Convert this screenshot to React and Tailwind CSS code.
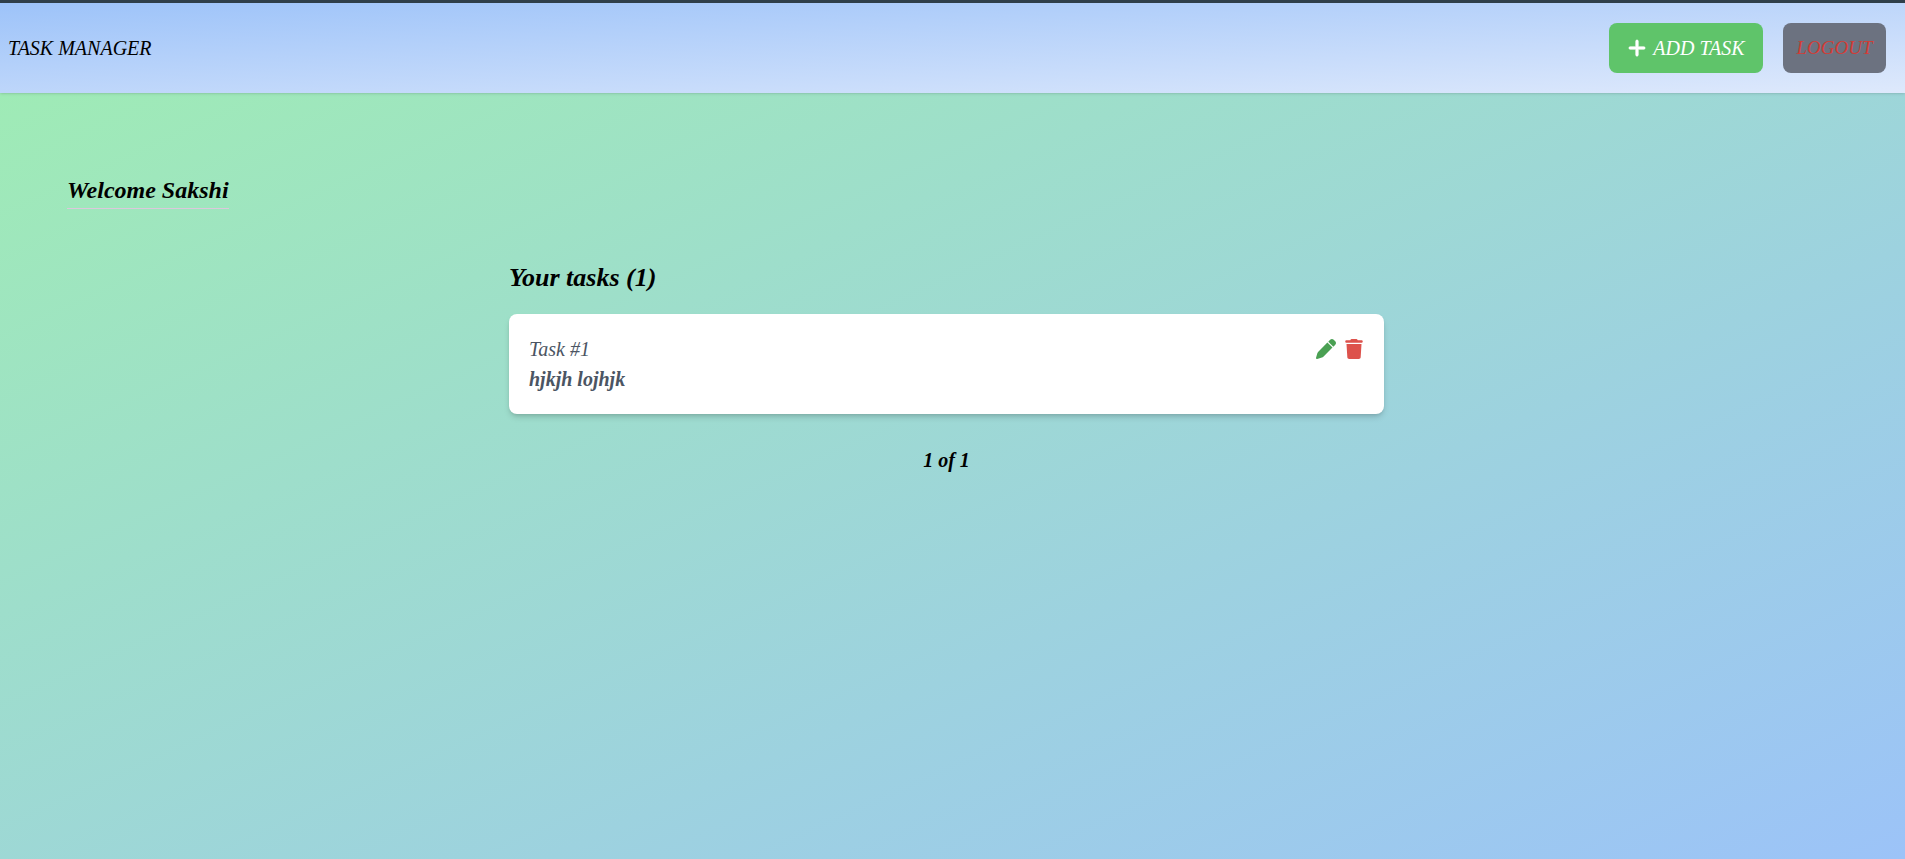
import React from "react";
import { FaPen, FaPlus, FaTrash } from "react-icons/fa6";

const tasks = [{ id: 1, description: "hjkjh lojhjk" }];

function Header() {
  return (
    <header className="flex items-center justify-between border-t-[3px] border-[#2f3f4a] bg-linear-to-br/srgb from-[#9dc3f9] to-[#dee9fc] px-2 py-5 shadow-sm">
      <a href="#home" className="leading-[50px]">TASK MANAGER</a>
      <nav className="mr-[11px] flex items-center gap-5">
        <a
          href="#add"
          className="flex h-[50px] w-[154px] items-center justify-center gap-1.5 rounded-lg bg-[#5fc46a] text-white"
        >
          <FaPlus aria-hidden="true" className="size-5 stroke-current stroke-[16px]" />
          ADD TASK
        </a>
        <button
          type="button"
          className="h-[50px] w-[103px] rounded-lg bg-[#6c7280] text-[19px] text-[#d23c36] italic"
        >
          LOGOUT
        </button>
      </nav>
    </header>
  );
}

function TaskCard({ task, number }) {
  return (
    <article className="rounded-lg bg-white p-5 leading-[30px] text-[#4b5563] shadow-md shadow-black/15">
      <div className="flex items-center justify-between">
        <span>Task #{number}</span>
        <div className="flex items-center gap-2">
          <button type="button" aria-label="Edit task" className="text-[#4aa053]">
            <FaPen className="size-5" />
          </button>
          <button type="button" aria-label="Delete task" className="text-[#dd524c]">
            <FaTrash className="size-5" />
          </button>
        </div>
      </div>
      <p className="font-bold">{task.description}</p>
    </article>
  );
}

export default function App() {
  return (
    <div className="flex min-h-screen flex-col bg-linear-to-br/srgb from-[#9fedb2] to-[#9cc3f8] font-['Liberation_Serif',serif] text-xl text-black italic">
      <Header />
      <main className="grow">
        <h1 className="mt-20 ml-[67px] w-fit border-b border-[#dcc8dc] text-2xl leading-[35px] font-bold">
          Welcome Sakshi
        </h1>
        <section className="mx-auto mt-12 w-[46%] max-w-[875px] -translate-x-1.5">
          <h2 className="mb-4 text-[26px] leading-[41px] font-bold">
            Your tasks ({tasks.length})
          </h2>
          {tasks.map((task, i) => (
            <TaskCard key={task.id} task={task} number={i + 1} />
          ))}
          <p className="mt-8 text-center font-bold">1 of 1</p>
        </section>
      </main>
    </div>
  );
}
